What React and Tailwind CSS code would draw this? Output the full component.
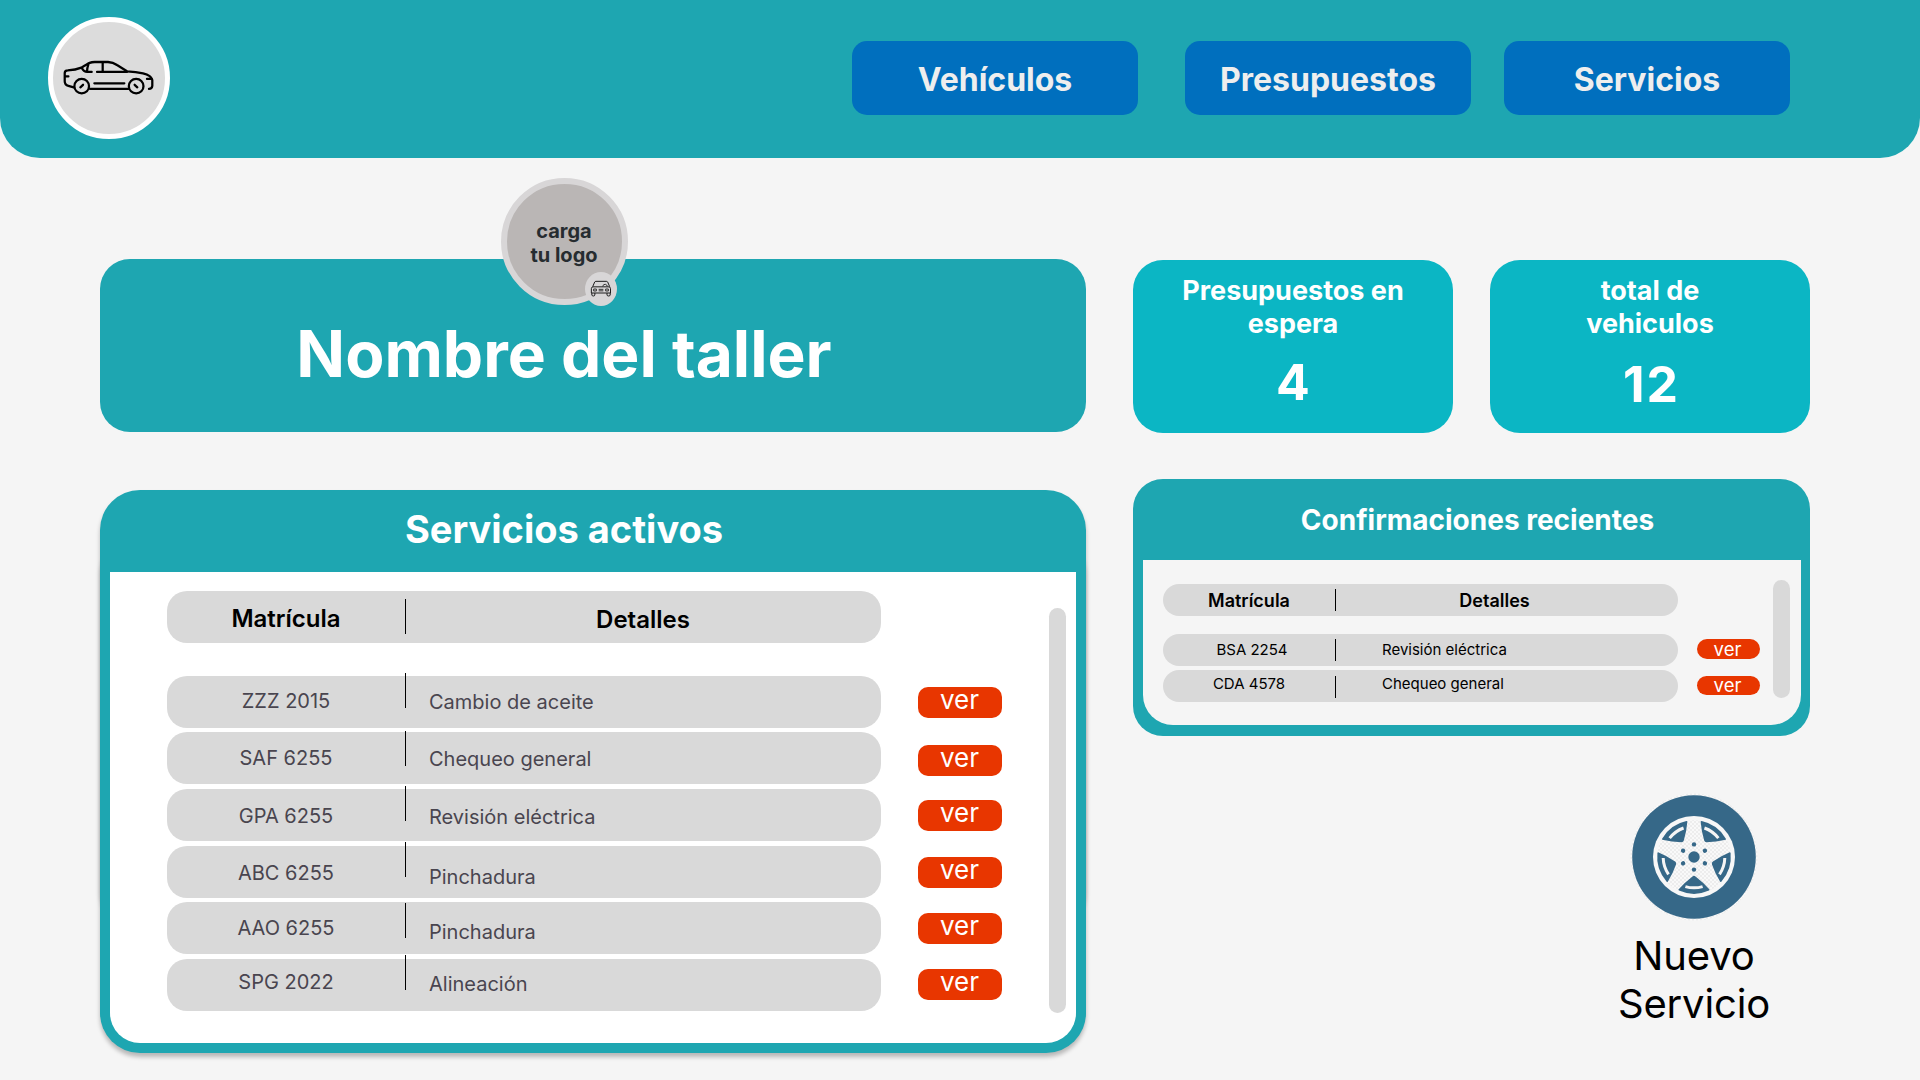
import React from "react";

const services = [
  { plate: "ZZZ 2015", detail: "Cambio de aceite", gap: "", plateTop: "mt-[13px]", lineTop: "-mt-[3px]", detailTop: "mt-[14px]", buttonTop: "mt-[11px]" },
  { plate: "SAF 6255", detail: "Chequeo general", gap: "mt-[4px]", plateTop: "mt-[14px]", lineTop: "-mt-px", detailTop: "mt-[15px]", buttonTop: "mt-[13px]" },
  { plate: "GPA 6255", detail: "Revisión eléctrica", gap: "mt-[5px]", plateTop: "mt-[15px]", lineTop: "-mt-[3px]", detailTop: "mt-[16px]", buttonTop: "mt-[11px]" },
  { plate: "ABC 6255", detail: "Pinchadura", gap: "mt-[5px]", plateTop: "mt-[15px]", lineTop: "-mt-[4px]", detailTop: "mt-[19px]", buttonTop: "mt-[11px]" },
  { plate: "AAO 6255", detail: "Pinchadura", gap: "mt-[4px]", plateTop: "mt-[14px]", lineTop: "mt-px", detailTop: "mt-[18px]", buttonTop: "mt-[11px]" },
  { plate: "SPG 2022", detail: "Alineación", gap: "mt-[5px]", plateTop: "mt-[11px]", lineTop: "-mt-[4px]", detailTop: "mt-[13px]", buttonTop: "mt-[10px]" },
];

const confirmations = [
  { plate: "BSA 2254", detail: "Revisión eléctrica", gap: "", plateCell: "mt-[6px] pl-[6px]", lineTop: "mt-[5px]", detailTop: "mt-[6px]", button: "mt-[5px] h-[20px] leading-[17px]" },
  { plate: "CDA 4578", detail: "Chequeo general", gap: "mt-[4px]", plateCell: "mt-[4px]", lineTop: "mt-[6px]", detailTop: "mt-[4px]", button: "mt-[6px] h-[19px] leading-[17px]" },
];

const windowAngles = [0, 72, 144, 216, 288];
const boltAngles = [0, 60, 120, 180, 240, 300];

function SedanIcon() {
  return (
    <svg viewBox="190 180 275 106" className="h-[35.3px] w-[91.7px]" fill="none" stroke="#000" strokeWidth="6.8" strokeLinecap="round" strokeLinejoin="round">
      <path d="M222 262 L206 258 Q195 255 195 244 V219 Q195 211 204 211 Q228 210 245 203 Q262 193 270 188.500 Q276 186 285 186 H325 Q340 187 352 195 L382 214 Q410 216 430 220 Q455 226 458 240 V258 Q457 267 448 267" />
      <path d="M271 267 H386 M292 216 H382 M309 187 V215 M246 204 Q253 216 262 216 H276 M266 193 Q262 205 262 214 M284 250 H374 M442 237 H456 M196 229.500 H206 M242 262 L250 254.500 M405 254.500 L413 262" />
      <circle cx="246" cy="258.500" r="22" />
      <circle cx="409.500" cy="258.500" r="22" />
    </svg>
  );
}

function FrontCarIcon() {
  return (
    <svg viewBox="331 358 65 51" className="h-[17px] w-[21.7px]" fill="none" stroke="#1c1c1c" strokeWidth="3" strokeLinejoin="round">
      <path d="M339 378 L345 364 Q346 362 349 362 H380 Q383 362 384 364 L390 378" />
      <path d="M340 378.500 H388 Q392.500 379 392.500 384 V397 H335 V384 Q335 379 340 378.500 Z" />
      <path d="M336.500 397 V403 Q337 406 341 406 Q345 406 345.500 403 V397 M382 397 V403 Q382.500 406 387 406 Q391 406 391.500 403 V397" />
      <path d="M342 385 H350 V391 H342 Z M378 385 H386 V391 H378 Z M357 386 H371 M357 390.500 H371 M369 377 Q371 370 377 371 Q382 372 383 377" strokeWidth="2.600" />
    </svg>
  );
}

function WheelIcon() {
  return (
    <svg viewBox="-66 -66 132 132" className="size-[132px]">
      <defs>
        <pattern id="checker" width="4" height="4" patternUnits="userSpaceOnUse">
          <rect width="4" height="4" fill="#f9f9f9" />
          <path d="M0 0h2v2h-2z M2 2h2v2h-2z" fill="#ededed" />
        </pattern>
      </defs>
      <circle r="63.500" fill="url(#checker)" />
      <circle r="61.800" fill="#366888" />
      <circle r="41" fill="#f7f7f7" />
      <circle r="37" fill="url(#checker)" />
      {windowAngles.map((a) => (
        <g key={a} transform={`rotate(${a})`}>
          <path d="M-1.500 19.400 Q0 18.200 1.500 19.400 Q9 25 15.500 32.600 Q15.600 33.300 15 33.600 A37 37 0 0 1 -15 33.600 Q-15.600 33.300 -15.500 32.600 Q-9 25 -1.500 19.400 Z" fill="#366888" />
          <path d="M-8.600 29.600 A31 31 0 0 0 8.600 29.600" fill="none" stroke="#f5f5f5" strokeWidth="3" />
        </g>
      ))}
      <circle r="5.700" fill="#366888" />
      {boltAngles.map((a) => (
        <circle key={a} cy="-12.600" r="2.200" fill="#366888" transform={`rotate(${a})`} />
      ))}
    </svg>
  );
}

function NavButton({ children, className = "" }) {
  return (
    <button className={`flex h-[74px] w-[286px] items-center justify-center rounded-[15px] bg-[#006fbe] pt-[3px] text-[32px] font-bold text-[#eeeeee] ${className}`}>
      {children}
    </button>
  );
}

function StatCard({ first, second, value, valueClass }) {
  return (
    <div className="flex h-[173px] w-[320px] flex-col items-center rounded-[30px] bg-[#0bb6c4] pt-[14px] text-center font-bold text-white">
      <div className="text-[27px] leading-[33px]">
        {first}
        <br />
        {second}
      </div>
      <div className={`text-[50px] leading-[60px] ${valueClass}`}>{value}</div>
    </div>
  );
}

export default function App() {
  return (
    <div className="h-[1080px] w-[1920px] overflow-hidden bg-[#f5f5f5] font-['Inter',sans-serif] text-black">
      <header className="flex h-[157.5px] rounded-b-[40px] bg-[#1ea6b1]">
        <div className="mt-[17px] ml-[48px] flex size-[122px] items-center justify-center rounded-full border-5 border-white bg-[#dcdcdc]">
          <SedanIcon />
        </div>
        <nav className="mt-[41px] ml-[682px] flex">
          <NavButton>Vehículos</NavButton>
          <NavButton className="ml-[47px]">Presupuestos</NavButton>
          <NavButton className="ml-[33px]">Servicios</NavButton>
        </nav>
      </header>

      <main className="flex pt-[101.5px] pl-[100px]">
        <div className="w-[986px]">
          <section className="relative flex h-[173px] items-center justify-center rounded-[30px] bg-[#1ea6b1] pt-[16px] pr-[58px]">
            <h1 className="text-[64px] leading-[78px] font-bold text-white">Nombre del taller</h1>
            <div className="absolute -top-[81px] left-[401px] flex size-[127px] items-center justify-center rounded-full border-6 border-[#d8d6d7] bg-[#bab6b5] pt-[2px] pr-px text-center text-[20px] leading-[24px] font-bold text-[#262c30]">
              <span>
                carga
                <br />
                tu logo
              </span>
            </div>
            <div className="absolute top-[13px] left-[485px] flex h-[34px] w-[32px] items-center justify-center rounded-[50%] bg-[#d8d6d7] pb-[2px]">
              <FrontCarIcon />
            </div>
          </section>

          <section className="relative mt-[58px] h-[563px]">
            <div className="absolute inset-x-0 top-[50px] h-[380px] rounded-[30px] shadow-[0_4px_4px_rgba(0,0,0,0.25)]" />
            <div className="relative h-full rounded-[40px] bg-[#1ea6b1] shadow-[0_4px_4px_rgba(0,0,0,0.25)]">
              <h2 className="flex h-[82px] items-center justify-center pr-[58px] pb-[4px] text-[38px] font-bold text-white">Servicios activos</h2>
              <div className="mx-[10px] flex h-[471px] rounded-b-[30px] bg-white pl-[57px]">
                <div className="pt-[19px]">
                  <div className="mb-[33px] flex h-[52px] w-[714px] items-start rounded-[20px] bg-[#d9d9d9] text-center text-[24px] leading-[30px] font-semibold">
                    <span className="mt-[13px] w-[238px]">Matrícula</span>
                    <span className="mt-[8px] h-[35px] w-px bg-black" />
                    <span className="mt-[14px] flex-1 pr-px">Detalles</span>
                  </div>
                  {services.map((s) => (
                    <div key={s.plate} className={`flex items-start ${s.gap}`}>
                      <div className="flex h-[52px] w-[714px] items-start rounded-[20px] bg-[#d9d9d9] text-[20px] leading-[24px] text-[#49454f]">
                        <span className={`w-[238px] text-center ${s.plateTop}`}>{s.plate}</span>
                        <span className={`h-[35px] w-px bg-black ${s.lineTop}`} />
                        <span className={`pl-[23px] ${s.detailTop}`}>{s.detail}</span>
                      </div>
                      <button className={`ml-[37px] h-[31px] w-[84px] rounded-[10px] bg-[#e83600] pr-px pb-[6px] text-center text-[26px] leading-[25px] text-white ${s.buttonTop}`}>ver</button>
                    </div>
                  ))}
                </div>
                <div className="mt-[36px] ml-[47px] h-[405px] w-[17px] rounded-full bg-[#d9d9d9]" />
              </div>
            </div>
          </section>
        </div>

        <div className="ml-[47px] w-[677px] pt-px">
          <div className="flex gap-[37px]">
            <StatCard first="Presupuestos en" second="espera" value="4" valueClass="mt-[12px]" />
            <StatCard first="total de" second="vehiculos" value="12" valueClass="mt-[14px] tracking-[2px] pl-[3px]" />
          </div>

          <section className="mt-[46px] h-[257px] rounded-[30px] bg-[#1ea6b1]">
            <h2 className="flex h-[81px] items-center justify-center pt-px pl-[12px] text-[28px] font-bold text-white">Confirmaciones recientes</h2>
            <div className="ml-[10px] flex h-[165px] w-[658px] rounded-b-[30px] bg-[#f5f5f5] pl-[20px]">
              <div className="pt-[24px]">
                <div className="mb-[18px] flex h-[32px] w-[515px] items-start rounded-[16px] bg-[#d9d9d9] text-center text-[18px] leading-[22px] font-semibold">
                  <span className="mt-[6px] w-[172px]">Matrícula</span>
                  <span className="mt-[5px] h-[22px] w-px bg-black" />
                  <span className="mt-[6px] flex-1 pr-[25px]">Detalles</span>
                </div>
                {confirmations.map((c) => (
                  <div key={c.plate} className={`flex items-start ${c.gap}`}>
                    <div className="flex h-[32px] w-[515px] items-start rounded-[16px] bg-[#d9d9d9] text-[15px] leading-[20px]">
                      <span className={`w-[172px] text-center ${c.plateCell}`}>{c.plate}</span>
                      <span className={`h-[22px] w-px bg-black ${c.lineTop}`} />
                      <span className={`pl-[46px] ${c.detailTop}`}>{c.detail}</span>
                    </div>
                    <button className={`ml-[19px] w-[63px] rounded-[10px] bg-[#e83600] pr-[2px] text-center text-[18.5px] text-white ${c.button}`}>ver</button>
                  </div>
                ))}
              </div>
              <div className="mt-[20px] ml-[13px] h-[118px] w-[17px] rounded-full bg-[#d9d9d9]" />
            </div>
          </section>

          <div className="mt-[55px] mr-[26px] ml-auto flex w-[180px] flex-col items-center">
            <WheelIcon />
            <div className="mt-[9px] text-center text-[40px] leading-[48px] tracking-[-0.15px]">
              Nuevo
              <br />
              Servicio
            </div>
          </div>
        </div>
      </main>
    </div>
  );
}
